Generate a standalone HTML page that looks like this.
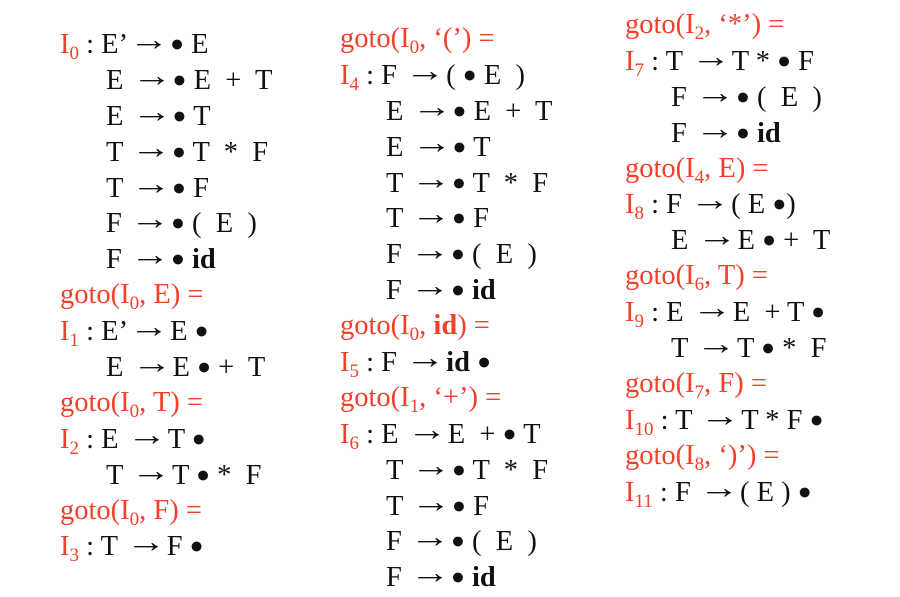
<!DOCTYPE html>
<html><head><meta charset="utf-8"><style>
body{margin:0;width:900px;height:597px;background:#fff;position:relative;overflow:hidden;font-family:"Liberation Serif",serif;font-size:28.5px;color:#111}
.col{position:absolute;line-height:35.9px}
.col div{white-space:pre;height:35.9px}
.r{color:#f2402a}
sub{font-size:19px;vertical-align:-6px;line-height:0}
.i{padding-left:46px}
.b{font-size:23px;vertical-align:2px}
.a{display:inline-block;font-size:32px;line-height:0;transform:scaleX(1.25);margin:0 5px;vertical-align:3px}
</style></head><body>
<div class="col" style="left:60px;top:26px">
<div><span class="r">I<sub>0</sub></span> : E’<span class="a">→</span><span class="b">●</span> E</div>
<div class="i">E <span class="a">→</span><span class="b">●</span> E  +  T</div>
<div class="i">E <span class="a">→</span><span class="b">●</span> T</div>
<div class="i">T <span class="a">→</span><span class="b">●</span> T  *  F</div>
<div class="i">T <span class="a">→</span><span class="b">●</span> F</div>
<div class="i">F <span class="a">→</span><span class="b">●</span> (  E  )</div>
<div class="i">F <span class="a">→</span><span class="b">●</span> <b>id</b></div>
<div class="r">goto(I<sub>0</sub>, E) =</div>
<div><span class="r">I<sub>1</sub></span> : E’<span class="a">→</span>E <span class="b">●</span></div>
<div class="i">E <span class="a">→</span>E <span class="b">●</span> +  T</div>
<div class="r">goto(I<sub>0</sub>, T) =</div>
<div><span class="r">I<sub>2</sub></span> : E <span class="a">→</span>T <span class="b">●</span></div>
<div class="i">T <span class="a">→</span>T <span class="b">●</span> *  F</div>
<div class="r">goto(I<sub>0</sub>, F) =</div>
<div><span class="r">I<sub>3</sub></span> : T <span class="a">→</span>F <span class="b">●</span></div>
</div>
<div class="col" style="left:340px;top:21px">
<div class="r">goto(I<sub>0</sub>, ‘(’) =</div>
<div><span class="r">I<sub>4</sub></span> : F <span class="a">→</span>( <span class="b">●</span> E  )</div>
<div class="i">E <span class="a">→</span><span class="b">●</span> E  +  T</div>
<div class="i">E <span class="a">→</span><span class="b">●</span> T</div>
<div class="i">T <span class="a">→</span><span class="b">●</span> T  *  F</div>
<div class="i">T <span class="a">→</span><span class="b">●</span> F</div>
<div class="i">F <span class="a">→</span><span class="b">●</span> (  E  )</div>
<div class="i">F <span class="a">→</span><span class="b">●</span> <b>id</b></div>
<div class="r">goto(I<sub>0</sub>, <b>id</b>) =</div>
<div><span class="r">I<sub>5</sub></span> : F <span class="a">→</span><b>id</b> <span class="b">●</span></div>
<div class="r">goto(I<sub>1</sub>, ‘+’) =</div>
<div><span class="r">I<sub>6</sub></span> : E <span class="a">→</span>E  + <span class="b">●</span> T</div>
<div class="i">T <span class="a">→</span><span class="b">●</span> T  *  F</div>
<div class="i">T <span class="a">→</span><span class="b">●</span> F</div>
<div class="i">F <span class="a">→</span><span class="b">●</span> (  E  )</div>
<div class="i">F <span class="a">→</span><span class="b">●</span> <b>id</b></div>
</div>
<div class="col" style="left:625px;top:7px">
<div class="r">goto(I<sub>2</sub>, ‘*’) =</div>
<div><span class="r">I<sub>7</sub></span> : T <span class="a">→</span>T * <span class="b">●</span> F</div>
<div class="i">F <span class="a">→</span><span class="b">●</span> (  E  )</div>
<div class="i">F <span class="a">→</span><span class="b">●</span> <b>id</b></div>
<div class="r">goto(I<sub>4</sub>, E) =</div>
<div><span class="r">I<sub>8</sub></span> : F <span class="a">→</span>( E <span class="b">●</span>)</div>
<div class="i">E <span class="a">→</span>E <span class="b">●</span> +  T</div>
<div class="r">goto(I<sub>6</sub>, T) =</div>
<div><span class="r">I<sub>9</sub></span> : E <span class="a">→</span>E  + T <span class="b">●</span></div>
<div class="i">T <span class="a">→</span>T <span class="b">●</span> *  F</div>
<div class="r">goto(I<sub>7</sub>, F) =</div>
<div><span class="r">I<sub>10</sub></span> : T <span class="a">→</span>T * F <span class="b">●</span></div>
<div class="r">goto(I<sub>8</sub>, ‘)’) =</div>
<div><span class="r">I<sub>11</sub></span> : F <span class="a">→</span>( E ) <span class="b">●</span></div>
</div>
</body></html>
